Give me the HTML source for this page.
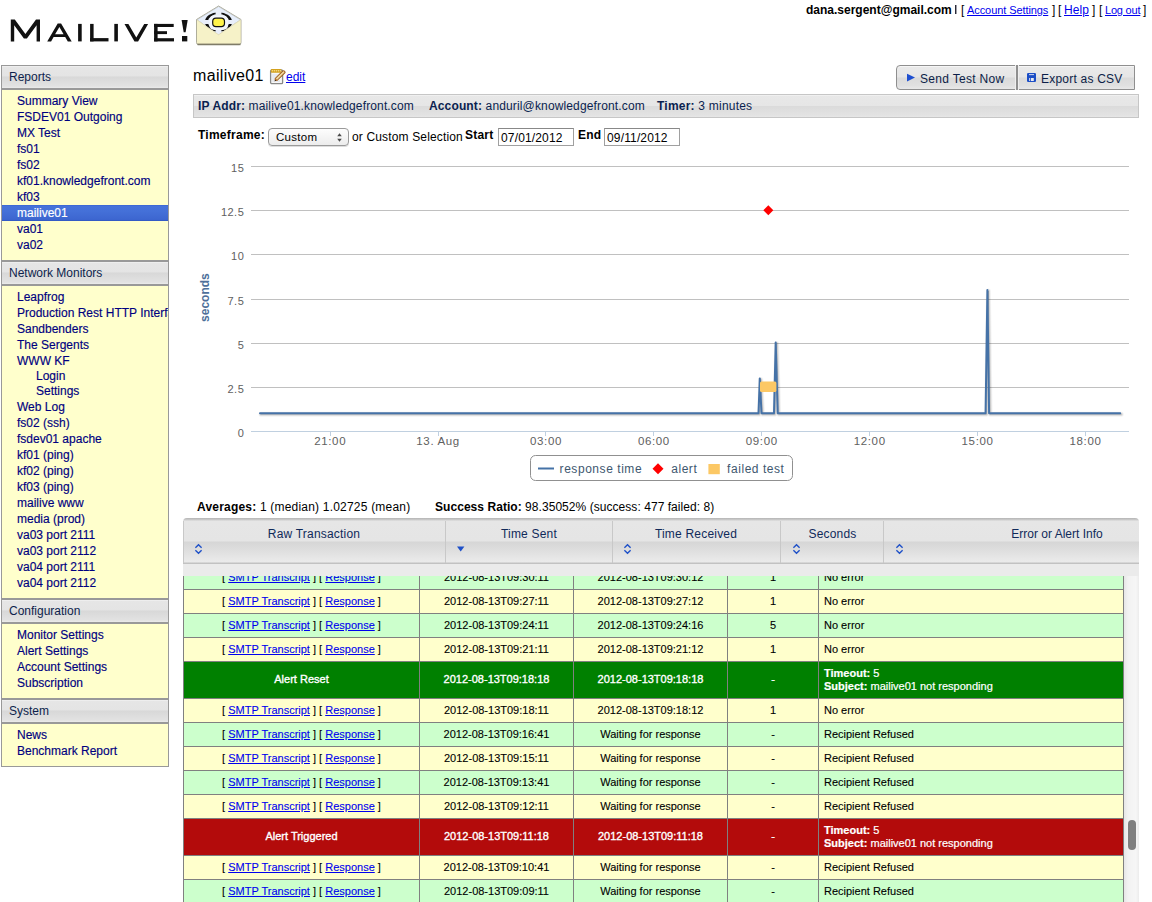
<!DOCTYPE html>
<html><head><meta charset="utf-8">
<style>
*{margin:0;padding:0;box-sizing:border-box}
html,body{width:1152px;height:902px;overflow:hidden;background:#fff;font-family:"Liberation Sans",sans-serif;font-size:12px;color:#000}
.sc{-webkit-text-stroke:0.15px currentColor}
#tb{-webkit-text-stroke:0.1px currentColor}
.a{position:absolute;white-space:nowrap}
a{color:#0000ee}
/* sidebar */
#side{position:absolute;left:1px;top:65px;width:168px}
.sh{height:24px;border:1px solid #999;background:linear-gradient(#e6e6e6 0,#e4e4e4 45%,#d8d8d8 50%,#e2e2e2 92%,#eaeaea 100%);color:#0d1f4c;font-size:12px;line-height:22px;padding-left:7px;box-shadow:inset 0 1px 0 #eee}
.sc{border:1px solid #999;background:#ffffcc;padding:3px 0 7px 0;color:#000080;font-size:12px;line-height:16px}
.sc div{padding-left:15px;height:16px;overflow:hidden;white-space:nowrap}
.sc div.sub{padding-left:34px;height:15px;line-height:15px}
.sc div.sel{background:linear-gradient(#3560d0 0,#4673da 1px,#4470d8 40%,#3d66d0 90%,#2f55c0 100%);color:#fff}
</style></head><body>

<!-- logo -->
<svg class="a" style="left:0;top:0" width="250" height="50" viewBox="0 0 250 50">
 <g fill="#111">
  <path d="M10.8 41.4 L10.8 19.5 L14.8 19.5 L25.4 33.9 L36 19.5 L40 19.5 L40 41.4 L36.6 41.4 L36.6 25.2 L26.9 38.6 L23.9 38.6 L14.2 25.2 L14.2 41.4 Z"/>
  <path fill-rule="evenodd" d="M47.2 41.4 L57.7 23.5 L61.1 23.5 L71.7 41.4 L67.8 41.4 L65.2 37 L53.6 37 L51.1 41.4 Z M55.1 34.2 L63.6 34.2 L59.4 27.1 Z"/>
  <rect x="78.1" y="23.9" width="3.6" height="17.5"/>
  <rect x="90.1" y="23.9" width="3.5" height="17.5"/><rect x="90.1" y="38.1" width="18.4" height="3.3"/>
  <rect x="114.3" y="23.9" width="3.6" height="17.5"/>
  <path d="M124.5 23.9 L128.4 23.9 L136.3 37.6 L144.2 23.9 L148.1 23.9 L138.1 41.4 L134.5 41.4 Z"/>
  <rect x="154.1" y="23.9" width="3.5" height="17.5"/><rect x="154.1" y="23.9" width="19.6" height="3.1"/><rect x="154.1" y="31.2" width="12.9" height="2.9"/><rect x="154.1" y="38.2" width="19.9" height="3.2"/>
  <path d="M181.6 20 L187.7 20 L185.6 32.2 L183.7 32.2 Z"/>
  <rect x="182" y="36" width="5.3" height="5.4"/>
 </g>
 <g>
  <path d="M196.5 19.5 L218.6 6 L241 19.5 L241 42.5 Q241 44.6 239 44.6 L198.5 44.6 Q196.5 44.6 196.5 42.5 Z" fill="#f5f1c6" stroke="#9c9a88" stroke-width="0.8"/>
  <path d="M197 19.8 L218.6 6.5 L240.5 19.8 L218.6 34.6 Z" fill="#e6eefb" stroke="#b0b4bc" stroke-width="0.6"/>
  <path fill-rule="evenodd" fill="#111" d="M204.9 22 A13.6 9.8 0 1 0 232.1 22 A13.6 9.8 0 1 0 204.9 22 Z M207.9 22 A10.6 8.1 0 1 0 229.1 22 A10.6 8.1 0 1 0 207.9 22 Z"/>
  <rect x="215.6" y="10" width="5.8" height="24" fill="#e9eefa"/>
  <rect x="203" y="20" width="31" height="4" fill="#e9eefa"/>
  <path d="M197 19.8 L218.6 34.6 L240.5 19.8 L240.5 42.8 L197 42.8 Z" fill="#f6f2c8"/>
  <path d="M197 20 L218.6 34.8 L240.5 20" fill="none" stroke="#dcd8b4" stroke-width="0.7"/>
  <rect x="209.2" y="15.6" width="19" height="14.3" rx="5" fill="#f2f5fc"/>
  <rect x="212.7" y="18.2" width="11.8" height="8.4" rx="3.3" fill="#fff34a" stroke="#111" stroke-width="1.2"/>
  <rect x="197.5" y="43.6" width="43" height="1.6" fill="#7f7c68"/>
 </g>
</svg>

<!-- top right -->
<div class="a" style="left:806px;top:2px;line-height:16px;font-weight:bold">dana.sergent@gmail.com</div>
<div class="a" style="left:955px;top:5px;width:1px;height:9px;background:#2a2a38;box-shadow:1px 0 0 rgba(40,40,60,0.45)"></div>
<div class="a" style="left:961px;top:2px;line-height:16px">[</div>
<a class="a" href="#" style="left:967px;top:2px;line-height:16px;font-size:11px;letter-spacing:-0.08px">Account Settings</a>
<div class="a" style="left:1052px;top:2px;line-height:16px">]</div>
<div class="a" style="left:1058px;top:2px;line-height:16px">[</div>
<a class="a" href="#" style="left:1064px;top:2px;line-height:16px;font-size:12px;letter-spacing:0.05px">Help</a>
<div class="a" style="left:1092px;top:2px;line-height:16px">]</div>
<div class="a" style="left:1099px;top:2px;line-height:16px">[</div>
<a class="a" href="#" style="left:1105px;top:2px;line-height:16px;font-size:11px;letter-spacing:-0.2px">Log out</a>
<div class="a" style="left:1143px;top:2px;line-height:16px">]</div>

<div id="side">
 <div class="sh">Reports</div>
 <div class="sc">
  <div>Summary View</div><div>FSDEV01 Outgoing</div><div>MX Test</div><div>fs01</div><div>fs02</div><div>kf01.knowledgefront.com</div><div>kf03</div><div class="sel">mailive01</div><div>va01</div><div>va02</div>
 </div>
 <div class="sh">Network Monitors</div>
 <div class="sc">
  <div>Leapfrog</div><div>Production Rest HTTP Interface</div><div>Sandbenders</div><div>The Sergents</div><div>WWW KF</div><div class="sub">Login</div><div class="sub">Settings</div><div>Web Log</div><div>fs02 (ssh)</div><div>fsdev01 apache</div><div>kf01 (ping)</div><div>kf02 (ping)</div><div>kf03 (ping)</div><div>mailive www</div><div>media (prod)</div><div>va03 port 2111</div><div>va03 port 2112</div><div>va04 port 2111</div><div>va04 port 2112</div>
 </div>
 <div class="sh">Configuration</div>
 <div class="sc">
  <div>Monitor Settings</div><div>Alert Settings</div><div>Account Settings</div><div>Subscription</div>
 </div>
 <div class="sh">System</div>
 <div class="sc">
  <div>News</div><div>Benchmark Report</div>
 </div>
</div>


<!-- title -->
<div class="a" style="left:193px;top:66px;font-size:16px;line-height:20px;letter-spacing:0.35px">mailive01</div>
<svg class="a" style="left:269px;top:68px" width="17" height="17" viewBox="0 0 17 17">
 <rect x="1.6" y="2" width="12" height="13.6" rx="1.2" fill="#f7f7f7" stroke="#8a8a88" stroke-width="1.3"/>
 <g stroke="#cfd6e2" stroke-width="0.8"><line x1="3.2" y1="7" x2="11" y2="7"/><line x1="3.2" y1="9" x2="10" y2="9"/><line x1="3.2" y1="11" x2="9" y2="11"/><line x1="3.2" y1="13" x2="11" y2="13"/></g>
 <rect x="1.8" y="1" width="10.6" height="3.8" rx="1" fill="#d4a21e"/>
 <g fill="#f6dc8c"><circle cx="3.4" cy="2.8" r="0.75"/><circle cx="5.4" cy="2.8" r="0.75"/><circle cx="7.4" cy="2.8" r="0.75"/><circle cx="9.4" cy="2.8" r="0.75"/><circle cx="11.4" cy="2.8" r="0.75"/></g>
 <line x1="7.6" y1="11" x2="14.6" y2="4.2" stroke="#9a5a1a" stroke-width="3.8" stroke-linecap="round"/>
 <line x1="7.6" y1="11" x2="14.6" y2="4.2" stroke="#f0d8a0" stroke-width="1.8" stroke-linecap="round"/>
 <path d="M5.6 13.2 L6.6 10.2 L8.6 12.2 Z" fill="#c07830"/>
 <path d="M5.6 13.2 L6.1 11.7 L7.1 12.7 Z" fill="#111"/>
</svg>
<a class="a" href="#" style="left:286px;top:67px;font-size:12px;line-height:20px">edit</a>

<!-- buttons -->
<div class="a" style="left:896px;top:65px;width:239px;height:25px;border:1px solid #8f8f8f;border-radius:4px 0 0 4px;background:linear-gradient(#eaeaea 0,#e6e6e6 48%,#dadada 52%,#e0e0e0 85%,#e8e8e8 100%);box-shadow:inset 0 1px 0 #f6f6f6"></div>
<div class="a" style="left:1016px;top:65px;width:2px;height:25px;background:#8f8f8f;box-shadow:-1px 0 0 #efefef,1px 0 0 #efefef"></div>
<svg class="a" style="left:906px;top:73px" width="10" height="10"><path d="M1 0.8 L9 4.6 L1 8.4 Z" fill="#1e4fd0"/></svg>
<div class="a" style="left:920px;top:71px;font-size:12px;line-height:16px;color:#0c1e48;letter-spacing:0.3px">Send Test Now</div>
<svg class="a" style="left:1026px;top:72px" width="11" height="11" viewBox="0 0 11 11">
 <path d="M1.8 1 L9.2 1 L10 1.8 L10 9.2 L9.2 10 L1.8 10 L1 9.2 L1 1.8 Z" fill="#1c4ec6"/>
 <rect x="3" y="2.1" width="5" height="1" fill="#cfd8f0"/>
 <rect x="3.2" y="6" width="1" height="3" fill="#e8eaf2"/><rect x="5" y="6" width="2.8" height="3" fill="#e8eaf2"/>
</svg>
<div class="a" style="left:1041px;top:71px;font-size:12px;line-height:16px;color:#0c1e48;letter-spacing:0.22px">Export as CSV</div>

<!-- info bar -->
<div class="a" style="left:193px;top:94px;width:946px;height:24px;border:1px solid #c6c6c6;background:linear-gradient(#e8e8e8 0,#e6e6e6 48%,#dbdbdb 52%,#e2e2e2 90%,#e6e6e6 100%);box-shadow:inset 0 1px 0 #f0f0f0"></div>
<div class="a" style="left:198px;top:98px;line-height:16px;color:#0b1f50;letter-spacing:0.14px"><b>IP Addr:</b> mailive01.knowledgefront.com</div>
<div class="a" style="left:429px;top:98px;line-height:16px;color:#0b1f50;letter-spacing:0.14px"><b>Account:</b> anduril@knowledgefront.com</div>
<div class="a" style="left:657px;top:98px;line-height:16px;color:#0b1f50;letter-spacing:0.22px"><b>Timer:</b> 3 minutes</div>

<!-- timeframe -->
<div class="a" style="left:198px;top:127px;line-height:16px;letter-spacing:0.25px"><b>Timeframe:</b></div>
<div class="a" style="left:268px;top:128px;width:81px;height:18px;border:1px solid #9a9a9a;border-radius:4px;background:linear-gradient(#fdfdfd,#ececec);box-shadow:0 1px 0 #ddd"></div>
<div class="a" style="left:276px;top:129px;font-size:11.5px;line-height:17px;letter-spacing:0.3px">Custom</div>
<svg class="a" style="left:336px;top:132px" width="7" height="11"><path d="M1.2 4.2 L3.5 1.2 L5.8 4.2 Z M1.2 6.8 L3.5 9.8 L5.8 6.8 Z" fill="#4a4a4a"/></svg>
<div class="a" style="left:352px;top:129px;line-height:16px;letter-spacing:0.15px">or Custom Selection</div>
<div class="a" style="left:465px;top:127px;line-height:16px;letter-spacing:0.2px"><b>Start</b></div>
<div class="a" style="left:498px;top:128px;width:76px;height:18px;border:1px solid #a0a0a0;border-top-color:#888;background:#fff"></div>
<div class="a" style="left:501px;top:130px;line-height:16px;letter-spacing:0.15px">07/01/2012</div>
<div class="a" style="left:578px;top:127px;line-height:16px;letter-spacing:0.2px"><b>End</b></div>
<div class="a" style="left:604px;top:128px;width:76px;height:18px;border:1px solid #a0a0a0;border-top-color:#888;background:#fff"></div>
<div class="a" style="left:607px;top:130px;line-height:16px;letter-spacing:0.15px">09/11/2012</div>

<!-- CHART -->
<svg class="a" style="left:0;top:0" width="1152" height="500" viewBox="0 0 1152 500">
<g stroke="#c0c0c0" stroke-width="1">
<line x1="251" y1="166.5" x2="1129" y2="166.5"/>
<line x1="251" y1="210.5" x2="1129" y2="210.5"/>
<line x1="251" y1="254.5" x2="1129" y2="254.5"/>
<line x1="251" y1="299.5" x2="1129" y2="299.5"/>
<line x1="251" y1="343.5" x2="1129" y2="343.5"/>
<line x1="251" y1="387.5" x2="1129" y2="387.5"/>
</g>
<line x1="251" y1="431.5" x2="1129" y2="431.5" stroke="#c0d0e0"/>
<g stroke="#c0d0e0">
<line x1="330.5" y1="431" x2="330.5" y2="436"/>
<line x1="438.5" y1="431" x2="438.5" y2="436"/>
<line x1="545.5" y1="431" x2="545.5" y2="436"/>
<line x1="653.5" y1="431" x2="653.5" y2="436"/>
<line x1="761.5" y1="431" x2="761.5" y2="436"/>
<line x1="869.5" y1="431" x2="869.5" y2="436"/>
<line x1="977.5" y1="431" x2="977.5" y2="436"/>
<line x1="1085.5" y1="431" x2="1085.5" y2="436"/>
</g>
<g font-family="Liberation Sans" font-size="11" fill="#606060" text-anchor="end" letter-spacing="0.5">
<text x="244.3" y="172.0">15</text>
<text x="244.3" y="216.2">12.5</text>
<text x="244.3" y="260.3">10</text>
<text x="244.3" y="304.5">7.5</text>
<text x="244.3" y="348.7">5</text>
<text x="244.3" y="392.8">2.5</text>
<text x="244.3" y="437">0</text>
</g>
<g font-family="Liberation Sans" font-size="11.5" fill="#606060" text-anchor="middle" letter-spacing="0.65">
<text x="330.2" y="444.8">21:00</text>
<text x="438.1" y="444.8">13. Aug</text>
<text x="546.0" y="444.8">03:00</text>
<text x="653.9" y="444.8">06:00</text>
<text x="761.8" y="444.8">09:00</text>
<text x="869.7" y="444.8">12:00</text>
<text x="977.6" y="444.8">15:00</text>
<text x="1085.5" y="444.8">18:00</text>
</g>
<text transform="translate(209.4,297.6) rotate(-90)" text-anchor="middle" font-family="Liberation Sans" font-weight="bold" font-size="12" fill="#4e6f9a">seconds</text>
<g fill="none" stroke-linejoin="round" stroke-linecap="round" transform="translate(1,1)"><polyline points="260,413.3 758.5,413.3 759.8,378.4 761.5,413.3 774,413.3 775.7,342.5 777.7,413.3 985.6,413.3 987.4,290 989.1,413.3 1120.2,413.3" stroke="rgba(0,0,0,0.05)" stroke-width="5"/><polyline points="260,413.3 758.5,413.3 759.8,378.4 761.5,413.3 774,413.3 775.7,342.5 777.7,413.3 985.6,413.3 987.4,290 989.1,413.3 1120.2,413.3" stroke="rgba(0,0,0,0.1)" stroke-width="3"/><polyline points="260,413.3 758.5,413.3 759.8,378.4 761.5,413.3 774,413.3 775.7,342.5 777.7,413.3 985.6,413.3 987.4,290 989.1,413.3 1120.2,413.3" stroke="rgba(0,0,0,0.15)" stroke-width="1"/></g>
<polyline points="260,413.3 758.5,413.3 759.8,378.4 761.5,413.3 774,413.3 775.7,342.5 777.7,413.3 985.6,413.3 987.4,290 989.1,413.3 1120.2,413.3" fill="none" stroke="#4572a7" stroke-width="2" stroke-linejoin="round" stroke-linecap="round"/>
<rect x="760" y="381.4" width="16.4" height="10.6" rx="1.5" fill="#fcc865"/>
<path d="M768.3 205.3 L773.3 210.3 L768.3 215.3 L763.3 210.3 Z" fill="#ff0000"/>
<rect x="530.5" y="455.5" width="262" height="25" rx="5" fill="#fff" stroke="#909090"/>
<line x1="538" y1="468.5" x2="554" y2="468.5" stroke="#4572a7" stroke-width="2"/>
<g font-family="Liberation Sans" font-size="12" fill="#3e576f" letter-spacing="0.55"><text x="559.6" y="473">response time</text><text x="671.2" y="473">alert</text><text x="727.1" y="473">failed test</text></g>
<path d="M658 463.3 L663.5 468.8 L658 474.3 L652.5 468.8 Z" fill="#ff0000"/>
<rect x="708.4" y="464" width="11.4" height="10.2" fill="#fcc865"/>
</svg>
<!-- /CHART -->
<!-- TABLE -->
<div class="a" style="left:197px;top:499px;line-height:16px;letter-spacing:0.2px"><b>Averages:</b> 1 (median) 1.02725 (mean)</div>
<div class="a" style="left:435px;top:499px;line-height:16px;letter-spacing:0.05px"><b>Success Ratio:</b> 98.35052% (success: 477 failed: 8)</div>
<div class="a" style="left:183px;top:518px;width:956px;height:46px;border-radius:4px 4px 0 0;background:linear-gradient(#b4b4b4 0,#cdcdcd 2px,#e6e6e6 3px,#e5e5e5 23px,#d6d6d6 24px,#e0e0e0 34px,#ebebeb 44px,#c2c2c2 45px,#c2c2c2 46px)"></div>
<div class="a" style="left:445px;top:521px;width:1px;height:42px;background:#c8c8c8"></div>
<div class="a" style="left:612px;top:521px;width:1px;height:42px;background:#c8c8c8"></div>
<div class="a" style="left:780px;top:521px;width:1px;height:42px;background:#c8c8c8"></div>
<div class="a" style="left:883px;top:521px;width:1px;height:42px;background:#c8c8c8"></div>
<div class="a" style="left:183px;top:564px;width:956px;height:12px;background:#ebebeb"></div>
<div class="a" style="left:183px;top:521px;width:1px;height:42px;background:#c8c8c8"></div>
<div class="a" style="left:164px;width:300px;text-align:center;top:526px;line-height:16px;color:#102a5a;letter-spacing:0.2px">Raw Transaction</div>
<div class="a" style="left:379px;width:300px;text-align:center;top:526px;line-height:16px;color:#102a5a;letter-spacing:0.2px">Time Sent</div>
<div class="a" style="left:546px;width:300px;text-align:center;top:526px;line-height:16px;color:#102a5a;letter-spacing:0.2px">Time Received</div>
<div class="a" style="left:682.5px;width:300px;text-align:center;top:526px;line-height:16px;color:#102a5a;letter-spacing:0.2px">Seconds</div>
<div class="a" style="left:907px;width:300px;text-align:center;top:526px;line-height:16px;color:#102a5a">Error or Alert Info</div>
<svg class="a" style="left:194px;top:543px" width="9" height="12" viewBox="0 0 9 12"><path d="M1.4 4.7 L4.5 1.8 L7.6 4.7 M1.4 7.3 L4.5 10.2 L7.6 7.3" fill="none" stroke="#1e50c8" stroke-width="1.4"/></svg>
<svg class="a" style="left:623px;top:543px" width="9" height="12" viewBox="0 0 9 12"><path d="M1.4 4.7 L4.5 1.8 L7.6 4.7 M1.4 7.3 L4.5 10.2 L7.6 7.3" fill="none" stroke="#1e50c8" stroke-width="1.4"/></svg>
<svg class="a" style="left:792px;top:543px" width="9" height="12" viewBox="0 0 9 12"><path d="M1.4 4.7 L4.5 1.8 L7.6 4.7 M1.4 7.3 L4.5 10.2 L7.6 7.3" fill="none" stroke="#1e50c8" stroke-width="1.4"/></svg>
<svg class="a" style="left:895px;top:543px" width="9" height="12" viewBox="0 0 9 12"><path d="M1.4 4.7 L4.5 1.8 L7.6 4.7 M1.4 7.3 L4.5 10.2 L7.6 7.3" fill="none" stroke="#1e50c8" stroke-width="1.4"/></svg>
<svg class="a" style="left:456px;top:545px" width="10" height="8"><path d="M1 1.5 L8.4 1.5 L4.7 6.5 Z" fill="#1e50c8"/></svg>
<div id="tb" class="a" style="left:183px;top:576px;width:941px;height:326px;overflow:hidden;border-left:1px solid #808080;border-right:1px solid #808080">
<div class="a" style="left:-1px;top:-11px;width:941px;height:24px;background:#ccffcc;border-top:1px solid #808080">
<div style="position:absolute;left:1px;top:0;width:235px;text-align:center;line-height:23px;color:#000;font-size:11px">[ <a href="#">SMTP Transcript</a> ] [ <a href="#">Response</a> ]</div>
<div style="position:absolute;left:237px;top:0;width:153px;text-align:center;line-height:23px;color:#000;font-size:11px">2012-08-13T09:30:11</div>
<div style="position:absolute;left:391px;top:0;width:153px;text-align:center;line-height:23px;color:#000;font-size:11px">2012-08-13T09:30:12</div>
<div style="position:absolute;left:545px;top:0;width:90px;text-align:center;line-height:23px;color:#000;font-size:11px">1</div>
<div style="position:absolute;left:0;top:0;line-height:23px;color:#000;font-size:11px;font-weight:normal"><div style="position:absolute;left:641px;top:0;line-height:23px">No error</div></div>
</div>
<div class="a" style="left:-1px;top:13px;width:941px;height:24px;background:#ffffcc;border-top:1px solid #808080">
<div style="position:absolute;left:1px;top:0;width:235px;text-align:center;line-height:23px;color:#000;font-size:11px">[ <a href="#">SMTP Transcript</a> ] [ <a href="#">Response</a> ]</div>
<div style="position:absolute;left:237px;top:0;width:153px;text-align:center;line-height:23px;color:#000;font-size:11px">2012-08-13T09:27:11</div>
<div style="position:absolute;left:391px;top:0;width:153px;text-align:center;line-height:23px;color:#000;font-size:11px">2012-08-13T09:27:12</div>
<div style="position:absolute;left:545px;top:0;width:90px;text-align:center;line-height:23px;color:#000;font-size:11px">1</div>
<div style="position:absolute;left:0;top:0;line-height:23px;color:#000;font-size:11px;font-weight:normal"><div style="position:absolute;left:641px;top:0;line-height:23px">No error</div></div>
</div>
<div class="a" style="left:-1px;top:37px;width:941px;height:24px;background:#ccffcc;border-top:1px solid #808080">
<div style="position:absolute;left:1px;top:0;width:235px;text-align:center;line-height:23px;color:#000;font-size:11px">[ <a href="#">SMTP Transcript</a> ] [ <a href="#">Response</a> ]</div>
<div style="position:absolute;left:237px;top:0;width:153px;text-align:center;line-height:23px;color:#000;font-size:11px">2012-08-13T09:24:11</div>
<div style="position:absolute;left:391px;top:0;width:153px;text-align:center;line-height:23px;color:#000;font-size:11px">2012-08-13T09:24:16</div>
<div style="position:absolute;left:545px;top:0;width:90px;text-align:center;line-height:23px;color:#000;font-size:11px">5</div>
<div style="position:absolute;left:0;top:0;line-height:23px;color:#000;font-size:11px;font-weight:normal"><div style="position:absolute;left:641px;top:0;line-height:23px">No error</div></div>
</div>
<div class="a" style="left:-1px;top:61px;width:941px;height:24px;background:#ffffcc;border-top:1px solid #808080">
<div style="position:absolute;left:1px;top:0;width:235px;text-align:center;line-height:23px;color:#000;font-size:11px">[ <a href="#">SMTP Transcript</a> ] [ <a href="#">Response</a> ]</div>
<div style="position:absolute;left:237px;top:0;width:153px;text-align:center;line-height:23px;color:#000;font-size:11px">2012-08-13T09:21:11</div>
<div style="position:absolute;left:391px;top:0;width:153px;text-align:center;line-height:23px;color:#000;font-size:11px">2012-08-13T09:21:12</div>
<div style="position:absolute;left:545px;top:0;width:90px;text-align:center;line-height:23px;color:#000;font-size:11px">1</div>
<div style="position:absolute;left:0;top:0;line-height:23px;color:#000;font-size:11px;font-weight:normal"><div style="position:absolute;left:641px;top:0;line-height:23px">No error</div></div>
</div>
<div class="a" style="left:-1px;top:85px;width:941px;height:37px;background:#008000;border-top:1px solid #808080">
<div style="position:absolute;left:1px;top:0;width:235px;text-align:center;line-height:35px;color:#fff;font-size:11px;-webkit-text-stroke:0.35px #fff">Alert Reset</div>
<div style="position:absolute;left:237px;top:0;width:153px;text-align:center;line-height:35px;color:#fff;font-size:11px;-webkit-text-stroke:0.35px #fff">2012-08-13T09:18:18</div>
<div style="position:absolute;left:391px;top:0;width:153px;text-align:center;line-height:35px;color:#fff;font-size:11px;-webkit-text-stroke:0.35px #fff">2012-08-13T09:18:18</div>
<div style="position:absolute;left:545px;top:0;width:90px;text-align:center;line-height:35px;color:#fff;font-size:11px;-webkit-text-stroke:0.35px #fff">-</div>
<div style="position:absolute;left:0;top:0;line-height:35px;color:#fff;font-size:11px;-webkit-text-stroke:0.35px #fff;font-weight:normal"><div style="position:absolute;left:641px;top:5px;line-height:13px;text-align:left;color:#fff;-webkit-text-stroke:0.2px #fff"><b>Timeout:</b> 5<br><b>Subject:</b> mailive01 not responding</div></div>
</div>
<div class="a" style="left:-1px;top:122px;width:941px;height:24px;background:#ffffcc;border-top:1px solid #808080">
<div style="position:absolute;left:1px;top:0;width:235px;text-align:center;line-height:23px;color:#000;font-size:11px">[ <a href="#">SMTP Transcript</a> ] [ <a href="#">Response</a> ]</div>
<div style="position:absolute;left:237px;top:0;width:153px;text-align:center;line-height:23px;color:#000;font-size:11px">2012-08-13T09:18:11</div>
<div style="position:absolute;left:391px;top:0;width:153px;text-align:center;line-height:23px;color:#000;font-size:11px">2012-08-13T09:18:12</div>
<div style="position:absolute;left:545px;top:0;width:90px;text-align:center;line-height:23px;color:#000;font-size:11px">1</div>
<div style="position:absolute;left:0;top:0;line-height:23px;color:#000;font-size:11px;font-weight:normal"><div style="position:absolute;left:641px;top:0;line-height:23px">No error</div></div>
</div>
<div class="a" style="left:-1px;top:146px;width:941px;height:24px;background:#ccffcc;border-top:1px solid #808080">
<div style="position:absolute;left:1px;top:0;width:235px;text-align:center;line-height:23px;color:#000;font-size:11px">[ <a href="#">SMTP Transcript</a> ] [ <a href="#">Response</a> ]</div>
<div style="position:absolute;left:237px;top:0;width:153px;text-align:center;line-height:23px;color:#000;font-size:11px">2012-08-13T09:16:41</div>
<div style="position:absolute;left:391px;top:0;width:153px;text-align:center;line-height:23px;color:#000;font-size:11px">Waiting for response</div>
<div style="position:absolute;left:545px;top:0;width:90px;text-align:center;line-height:23px;color:#000;font-size:11px">-</div>
<div style="position:absolute;left:0;top:0;line-height:23px;color:#000;font-size:11px;font-weight:normal"><div style="position:absolute;left:641px;top:0;line-height:23px">Recipient Refused</div></div>
</div>
<div class="a" style="left:-1px;top:170px;width:941px;height:24px;background:#ffffcc;border-top:1px solid #808080">
<div style="position:absolute;left:1px;top:0;width:235px;text-align:center;line-height:23px;color:#000;font-size:11px">[ <a href="#">SMTP Transcript</a> ] [ <a href="#">Response</a> ]</div>
<div style="position:absolute;left:237px;top:0;width:153px;text-align:center;line-height:23px;color:#000;font-size:11px">2012-08-13T09:15:11</div>
<div style="position:absolute;left:391px;top:0;width:153px;text-align:center;line-height:23px;color:#000;font-size:11px">Waiting for response</div>
<div style="position:absolute;left:545px;top:0;width:90px;text-align:center;line-height:23px;color:#000;font-size:11px">-</div>
<div style="position:absolute;left:0;top:0;line-height:23px;color:#000;font-size:11px;font-weight:normal"><div style="position:absolute;left:641px;top:0;line-height:23px">Recipient Refused</div></div>
</div>
<div class="a" style="left:-1px;top:194px;width:941px;height:24px;background:#ccffcc;border-top:1px solid #808080">
<div style="position:absolute;left:1px;top:0;width:235px;text-align:center;line-height:23px;color:#000;font-size:11px">[ <a href="#">SMTP Transcript</a> ] [ <a href="#">Response</a> ]</div>
<div style="position:absolute;left:237px;top:0;width:153px;text-align:center;line-height:23px;color:#000;font-size:11px">2012-08-13T09:13:41</div>
<div style="position:absolute;left:391px;top:0;width:153px;text-align:center;line-height:23px;color:#000;font-size:11px">Waiting for response</div>
<div style="position:absolute;left:545px;top:0;width:90px;text-align:center;line-height:23px;color:#000;font-size:11px">-</div>
<div style="position:absolute;left:0;top:0;line-height:23px;color:#000;font-size:11px;font-weight:normal"><div style="position:absolute;left:641px;top:0;line-height:23px">Recipient Refused</div></div>
</div>
<div class="a" style="left:-1px;top:218px;width:941px;height:24px;background:#ffffcc;border-top:1px solid #808080">
<div style="position:absolute;left:1px;top:0;width:235px;text-align:center;line-height:23px;color:#000;font-size:11px">[ <a href="#">SMTP Transcript</a> ] [ <a href="#">Response</a> ]</div>
<div style="position:absolute;left:237px;top:0;width:153px;text-align:center;line-height:23px;color:#000;font-size:11px">2012-08-13T09:12:11</div>
<div style="position:absolute;left:391px;top:0;width:153px;text-align:center;line-height:23px;color:#000;font-size:11px">Waiting for response</div>
<div style="position:absolute;left:545px;top:0;width:90px;text-align:center;line-height:23px;color:#000;font-size:11px">-</div>
<div style="position:absolute;left:0;top:0;line-height:23px;color:#000;font-size:11px;font-weight:normal"><div style="position:absolute;left:641px;top:0;line-height:23px">Recipient Refused</div></div>
</div>
<div class="a" style="left:-1px;top:242px;width:941px;height:37px;background:#b30b0b;border-top:1px solid #808080">
<div style="position:absolute;left:1px;top:0;width:235px;text-align:center;line-height:35px;color:#fff;font-size:11px;-webkit-text-stroke:0.35px #fff">Alert Triggered</div>
<div style="position:absolute;left:237px;top:0;width:153px;text-align:center;line-height:35px;color:#fff;font-size:11px;-webkit-text-stroke:0.35px #fff">2012-08-13T09:11:18</div>
<div style="position:absolute;left:391px;top:0;width:153px;text-align:center;line-height:35px;color:#fff;font-size:11px;-webkit-text-stroke:0.35px #fff">2012-08-13T09:11:18</div>
<div style="position:absolute;left:545px;top:0;width:90px;text-align:center;line-height:35px;color:#fff;font-size:11px;-webkit-text-stroke:0.35px #fff">-</div>
<div style="position:absolute;left:0;top:0;line-height:35px;color:#fff;font-size:11px;-webkit-text-stroke:0.35px #fff;font-weight:normal"><div style="position:absolute;left:641px;top:5px;line-height:13px;text-align:left;color:#fff;-webkit-text-stroke:0.2px #fff"><b>Timeout:</b> 5<br><b>Subject:</b> mailive01 not responding</div></div>
</div>
<div class="a" style="left:-1px;top:279px;width:941px;height:24px;background:#ffffcc;border-top:1px solid #808080">
<div style="position:absolute;left:1px;top:0;width:235px;text-align:center;line-height:23px;color:#000;font-size:11px">[ <a href="#">SMTP Transcript</a> ] [ <a href="#">Response</a> ]</div>
<div style="position:absolute;left:237px;top:0;width:153px;text-align:center;line-height:23px;color:#000;font-size:11px">2012-08-13T09:10:41</div>
<div style="position:absolute;left:391px;top:0;width:153px;text-align:center;line-height:23px;color:#000;font-size:11px">Waiting for response</div>
<div style="position:absolute;left:545px;top:0;width:90px;text-align:center;line-height:23px;color:#000;font-size:11px">-</div>
<div style="position:absolute;left:0;top:0;line-height:23px;color:#000;font-size:11px;font-weight:normal"><div style="position:absolute;left:641px;top:0;line-height:23px">Recipient Refused</div></div>
</div>
<div class="a" style="left:-1px;top:303px;width:941px;height:24px;background:#ccffcc;border-top:1px solid #808080">
<div style="position:absolute;left:1px;top:0;width:235px;text-align:center;line-height:23px;color:#000;font-size:11px">[ <a href="#">SMTP Transcript</a> ] [ <a href="#">Response</a> ]</div>
<div style="position:absolute;left:237px;top:0;width:153px;text-align:center;line-height:23px;color:#000;font-size:11px">2012-08-13T09:09:11</div>
<div style="position:absolute;left:391px;top:0;width:153px;text-align:center;line-height:23px;color:#000;font-size:11px">Waiting for response</div>
<div style="position:absolute;left:545px;top:0;width:90px;text-align:center;line-height:23px;color:#000;font-size:11px">-</div>
<div style="position:absolute;left:0;top:0;line-height:23px;color:#000;font-size:11px;font-weight:normal"><div style="position:absolute;left:641px;top:0;line-height:23px">Recipient Refused</div></div>
</div>
<div class="a" style="left:235px;top:0;width:1px;height:326px;background:#808080"></div>
<div class="a" style="left:389px;top:0;width:1px;height:326px;background:#808080"></div>
<div class="a" style="left:543px;top:0;width:1px;height:326px;background:#808080"></div>
<div class="a" style="left:634px;top:0;width:1px;height:326px;background:#808080"></div>
</div>
<div class="a" style="left:1124px;top:576px;width:15px;height:326px;background:linear-gradient(90deg,#e6e6e6 0,#f2f2f2 4px,#f6f6f6 12px,#ececec 15px)"></div>
<div class="a" style="left:1128px;top:820px;width:8px;height:30px;border-radius:4px;background:#808080"></div>
<!-- /TABLE -->
</body></html>
